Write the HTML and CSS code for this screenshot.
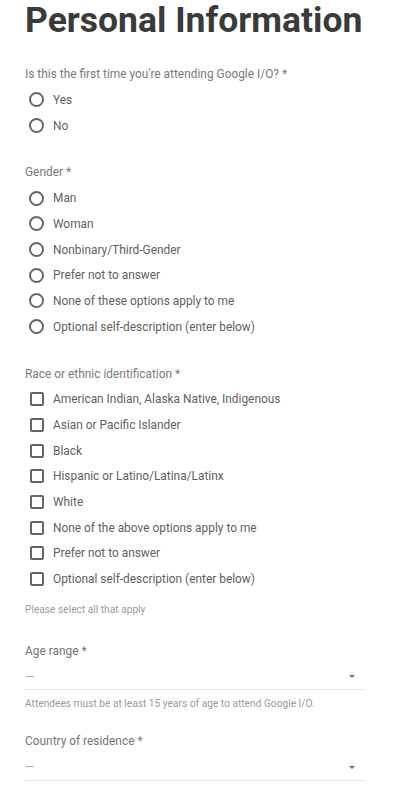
FILE: index.html
```html
<!DOCTYPE html>
<html lang="en">
<head>
<meta charset="utf-8">
<title>Personal Information</title>
<link rel="stylesheet" href="styles.css">
</head>
<body>
<main class="page">
  <h1 class="title">Personal Information</h1>

  <section class="group first">
    <div class="q-label">Is this the first time you're attending Google I/O? *</div>
    <div class="options radios">
      <div class="opt"><span class="radio"></span><span class="opt-text">Yes</span></div>
      <div class="opt"><span class="radio"></span><span class="opt-text">No</span></div>
    </div>
  </section>

  <section class="group">
    <div class="q-label">Gender *</div>
    <div class="options radios">
      <div class="opt"><span class="radio"></span><span class="opt-text">Man</span></div>
      <div class="opt"><span class="radio"></span><span class="opt-text">Woman</span></div>
      <div class="opt"><span class="radio"></span><span class="opt-text">Nonbinary/Third-Gender</span></div>
      <div class="opt"><span class="radio"></span><span class="opt-text">Prefer not to answer</span></div>
      <div class="opt"><span class="radio"></span><span class="opt-text">None of these options apply to me</span></div>
      <div class="opt"><span class="radio"></span><span class="opt-text">Optional self-description (enter below)</span></div>
    </div>
  </section>

  <section class="group">
    <div class="q-label">Race or ethnic identification *</div>
    <div class="options checks">
      <div class="opt"><span class="check"></span><span class="opt-text">American Indian, Alaska Native, Indigenous</span></div>
      <div class="opt"><span class="check"></span><span class="opt-text">Asian or Pacific Islander</span></div>
      <div class="opt"><span class="check"></span><span class="opt-text">Black</span></div>
      <div class="opt"><span class="check"></span><span class="opt-text">Hispanic or Latino/Latina/Latinx</span></div>
      <div class="opt"><span class="check"></span><span class="opt-text">White</span></div>
      <div class="opt"><span class="check"></span><span class="opt-text">None of the above options apply to me</span></div>
      <div class="opt"><span class="check"></span><span class="opt-text">Prefer not to answer</span></div>
      <div class="opt"><span class="check"></span><span class="opt-text">Optional self-description (enter below)</span></div>
    </div>
    <div class="hint">Please select all that apply</div>
  </section>

  <section class="group">
    <div class="field-label">Age range *</div>
    <div class="select">
      <span class="select-value">—</span>
      <span class="arrow"></span>
    </div>
    <div class="helper">Attendees must be at least 15 years of age to attend Google I/O.</div>
  </section>

  <section class="group country">
    <div class="field-label">Country of residence *</div>
    <div class="select">
      <span class="select-value">—</span>
      <span class="arrow"></span>
    </div>
  </section>
</main>
</body>
</html>
```

FILE: styles.css
```css
html, body {
  margin: 0;
  padding: 0;
  background: #ffffff;
}

body {
  font-family: Roboto, "Liberation Sans", Arial, sans-serif;
  color: #616161;
}

.page {
  width: 340px;
  padding: 0 0 0 25px;
  display: flex;
  flex-direction: column;
}

.title {
  margin: 0;
  font-size: 35.5px;
  line-height: 40px;
  font-weight: 700;
  color: #3a3a3a;
}

.group {
  display: flex;
  flex-direction: column;
  margin-top: 26px;
}

.group.first {
  margin-top: 26px;
}

.q-label {
  font-size: 11.9px;
  line-height: 16px;
  color: #7a7a7a;
}

.options {
  display: flex;
  flex-direction: column;
  margin-top: 5px;
}

.checks {
  margin-top: 5px;
}

.opt {
  display: flex;
  align-items: center;
  height: 25.7px;
  padding-left: 4px;
}

.radio {
  box-sizing: border-box;
  width: 15px;
  height: 15px;
  border: 2px solid #666666;
  border-radius: 50%;
  flex: none;
}

.check {
  box-sizing: border-box;
  width: 14px;
  height: 14px;
  border: 2px solid #666666;
  border-radius: 2px;
  flex: none;
  margin-left: 1px;
}

.opt-text {
  margin-left: 9px;
  font-size: 11.9px;
  line-height: 16px;
  color: #5f5f5f;
}

.hint {
  margin-top: 11px;
  font-size: 10.2px;
  line-height: 14px;
  color: #9a9a9a;
}

.field-label {
  font-size: 11.9px;
  line-height: 16px;
  color: #757575;
}

.select {
  display: flex;
  align-items: center;
  justify-content: space-between;
  height: 31px;
  border-bottom: 1px solid #e3e3e3;
  box-sizing: border-box;
  padding-right: 10px;
  padding-top: 5px;
}

.select-value {
  font-size: 12px;
  line-height: 14px;
  color: #a8a8a8;
}

.arrow {
  width: 0;
  height: 0;
  border-left: 3px solid transparent;
  border-right: 3px solid transparent;
  border-top: 3px solid #6a6a6a;
}

.helper {
  margin-top: 7px;
  font-size: 10.2px;
  line-height: 14px;
  color: #9a9a9a;
}

.country {
  margin-top: 22px;
}

.country .select {
  height: 32px;
}
```
